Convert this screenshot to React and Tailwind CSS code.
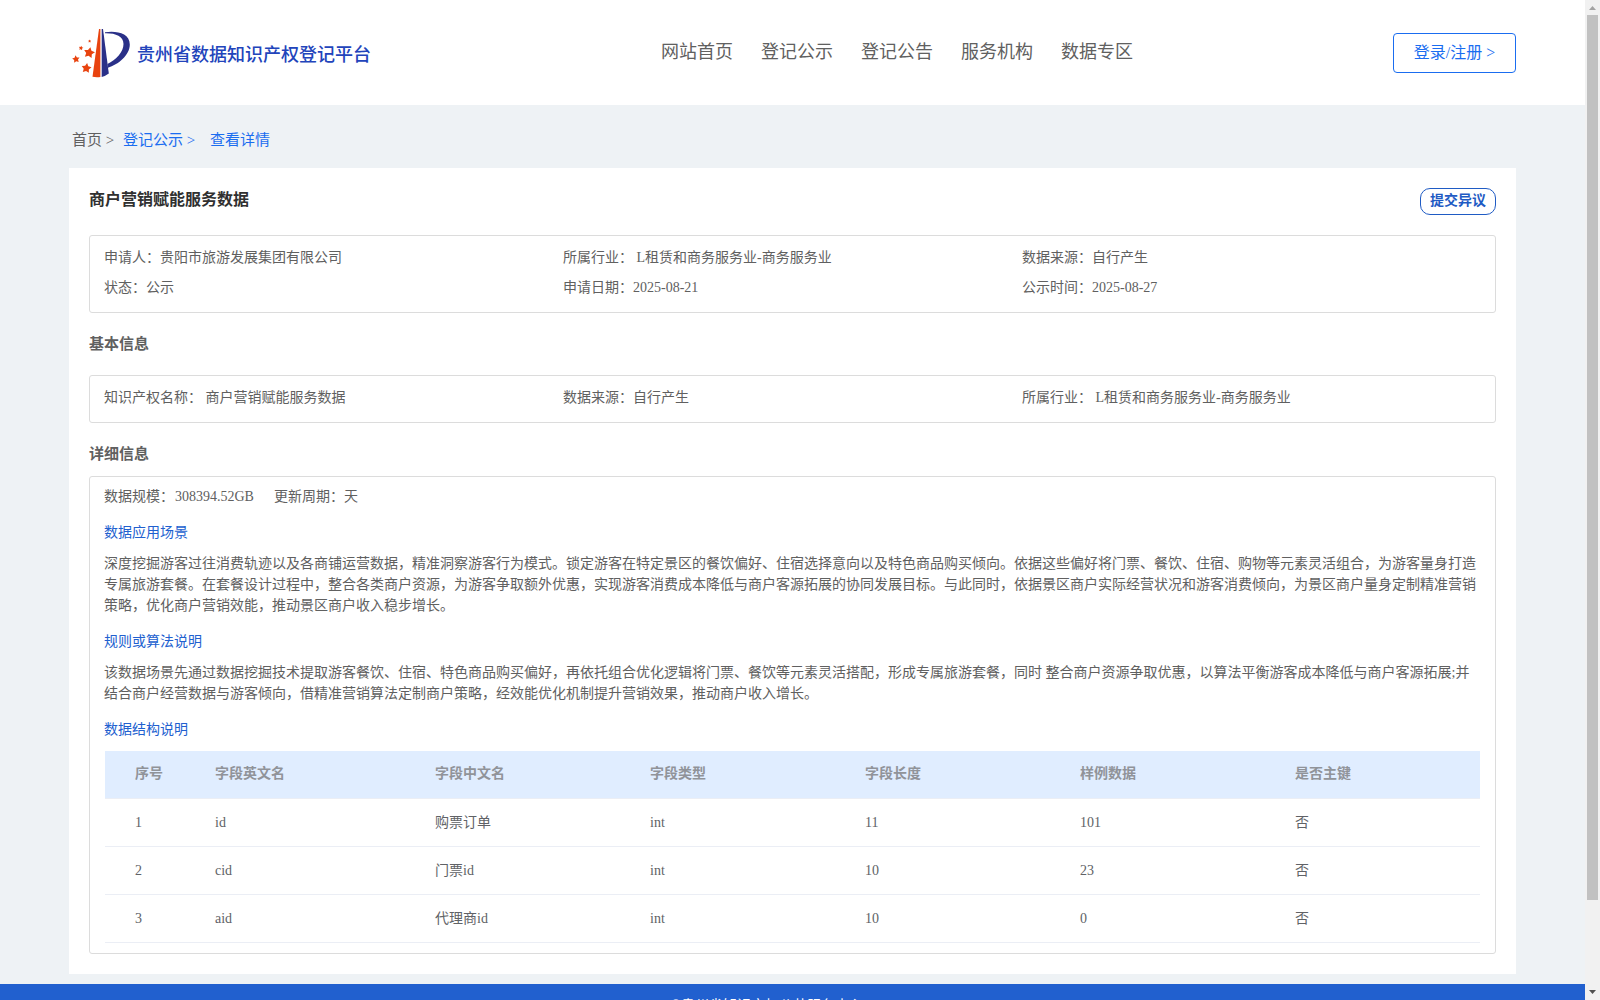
import React from 'react';

const navItems = ['网站首页', '登记公示', '登记公告', '服务机构', '数据专区'];

const summary = [
  ['申请人：', '贵阳市旅游发展集团有限公司'],
  ['所属行业：', ' L租赁和商务服务业-商务服务业'],
  ['数据来源：', '自行产生'],
  ['状态：', '公示'],
  ['申请日期：', '2025-08-21'],
  ['公示时间：', '2025-08-27'],
];

const basicInfo = [
  ['知识产权名称：', ' 商户营销赋能服务数据'],
  ['数据来源：', '自行产生'],
  ['所属行业：', ' L租赁和商务服务业-商务服务业'],
];

const sceneLines = [
  '深度挖掘游客过往消费轨迹以及各商铺运营数据，精准洞察游客行为模式。锁定游客在特定景区的餐饮偏好、住宿选择意向以及特色商品购买倾向。依据这些偏好将门票、餐饮、住宿、购物等元素灵活组合，为游客量身打造',
  '专属旅游套餐。在套餐设计过程中，整合各类商户资源，为游客争取额外优惠，实现游客消费成本降低与商户客源拓展的协同发展目标。与此同时，依据景区商户实际经营状况和游客消费倾向，为景区商户量身定制精准营销',
  '策略，优化商户营销效能，推动景区商户收入稳步增长。',
];

const ruleLines = [
  '该数据场景先通过数据挖掘技术提取游客餐饮、住宿、特色商品购买偏好，再依托组合优化逻辑将门票、餐饮等元素灵活搭配，形成专属旅游套餐，同时 整合商户资源争取优惠，以算法平衡游客成本降低与商户客源拓展;并',
  '结合商户经营数据与游客倾向，借精准营销算法定制商户策略，经效能优化机制提升营销效果，推动商户收入增长。',
];

const columns = ['序号', '字段英文名', '字段中文名', '字段类型', '字段长度', '样例数据', '是否主键'];

const rows = [
  ['1', 'id', '购票订单', 'int', '11', '101', '否'],
  ['2', 'cid', '门票id', 'int', '10', '23', '否'],
  ['3', 'aid', '代理商id', 'int', '10', '0', '否'],
];

const gridCols = 'grid grid-cols-[80px_220px_215px_215px_215px_215px_185px] pl-[30px]';

// [cx, cy, radius, rotation]
const stars = [
  [17.2, 24.8, 5.8, 12],
  [14.4, 40.2, 5.2, 8],
  [4, 31.2, 3.9, -8],
  [9, 20, 2.4, 10],
  [17.6, 13.2, 1.6, 0],
];

function starPoints(cx, cy, r, rotation) {
  return Array.from({ length: 10 }, (_, i) => {
    const radius = i % 2 ? r * 0.52 : r;
    const angle = ((i * 36 - 90 + rotation) * Math.PI) / 180;
    return `${(cx + radius * Math.cos(angle)).toFixed(2)},${(cy + radius * Math.sin(angle)).toFixed(2)}`;
  }).join(' ');
}

function Logo() {
  return (
    <svg width="58" height="50" viewBox="0 0 58 50" className="shrink-0">
      <path d="M27 1 L28.4 1 L28.4 49 Q24 49.5 20.500 48.800 Z" fill="#e8430f" />
      <path d="M29.700 1 L31 1 L36.8 45.5 Q33.500 48 29.700 49 Z" fill="#2a3088" />
      <path
        d="M33 4.300 C44 2.500 57.800 5 57.800 16.500 C57.800 27.500 46 36.500 36 39.800 L35.400 36 C44 32 51.500 24 51.500 16 C51.500 8 43 5 33 5.300 Z"
        fill="#2a3088"
      />
      <g fill="#e8430f">
        {stars.map(([cx, cy, r, rotation]) => (
          <polygon key={cx} points={starPoints(cx, cy, r, rotation)} />
        ))}
      </g>
    </svg>
  );
}

function InfoGrid({ items }) {
  return (
    <div className="grid grid-cols-3">
      {items.map(([label, value]) => (
        <div key={label} className="h-[30px] leading-[30px] whitespace-pre">
          {label}
          {value}
        </div>
      ))}
    </div>
  );
}

function TextBlock({ title, lines }) {
  return (
    <section>
      <h4 className="leading-[30px] text-[#2160cf]">{title}</h4>
      <div className="pt-[5px] pb-[11px] leading-[21px] whitespace-pre">
        {lines.map((line) => (
          <p key={line}>{line}</p>
        ))}
      </div>
    </section>
  );
}

function FieldTable() {
  return (
    <div className="ml-px w-[1375px]">
      <div className={`${gridCols} h-12 items-center border-b border-[#ebeef5] bg-[#e0edff] pb-px font-bold text-[#909399]`}>
        {columns.map((name) => (
          <div key={name}>{name}</div>
        ))}
      </div>
      {rows.map((row) => (
        <div key={row[0]} className={`${gridCols} h-12 items-center border-b border-[#ebeef5] text-[#606266]`}>
          {row.map((cell, i) => (
            <div key={columns[i]}>{cell}</div>
          ))}
        </div>
      ))}
    </div>
  );
}

function Scrollbar() {
  return (
    <div className="flex h-full w-[15px] shrink-0 flex-col items-center bg-[#f1f1f1]">
      <svg width="15" height="15" viewBox="0 0 15 15">
        <path d="M4 10 L7.500 6 L11 10 Z" fill="#a3a3a3" />
      </svg>
      <div className="h-[885px] w-[11px] bg-[#c1c1c1]" />
      <svg width="15" height="15" viewBox="0 0 15 15" className="mt-auto">
        <path d="M4 5 L11 5 L7.500 9 Z" fill="#505050" />
      </svg>
    </div>
  );
}

export default function App() {
  return (
    <div className="flex h-[1000px] w-[1600px] overflow-hidden bg-[#eef2f5] font-['Liberation_Serif','Noto_Sans_CJK_SC',serif] text-sm text-[#606060]">
      <div className="flex h-full w-[1585px] flex-col overflow-hidden">
        <header className="flex h-[105px] shrink-0 items-start bg-white pr-[69px] pl-[72px]">
          <div className="flex w-[589px] items-center pt-[28px]">
            <Logo />
            <span className="ml-[7px] pt-[3px] text-lg leading-6 font-medium text-[#2244bb]">贵州省数据知识产权登记平台</span>
          </div>
          <nav className="flex gap-7 pt-10 text-lg leading-6">
            {navItems.map((item) => (
              <a key={item}>{item}</a>
            ))}
          </nav>
          <button className="mt-[33px] ml-auto h-10 w-[123px] rounded border border-[#1a6df0] text-base leading-6 text-[#1a6df0]">
            登录/注册 &gt;
          </button>
        </header>

        <div className="flex h-[63px] shrink-0 items-center pt-[7px] pl-[72px] text-[15px] leading-6 whitespace-pre">
          <span className="w-[51px]">首页 &gt;</span>
          <span className="w-[87px] text-[#1a6df0]">登记公示 &gt;</span>
          <span className="text-[#1a6df0]">查看详情</span>
        </div>

        <main className="ml-[69px] h-[806px] w-[1447px] shrink-0 bg-white px-5 pt-5">
          <div className="flex h-[47px] items-start justify-between">
            <h2 className="text-base leading-6 font-bold text-[#303030]">商户营销赋能服务数据</h2>
            <button className="h-[27px] w-[76px] rounded-[10px] border border-[#1f5bc4] pb-px leading-5 font-bold text-[#1f5bc4]">
              提交异议
            </button>
          </div>

          <div className="h-[78px] rounded-[3px] border border-[#dcdcdc] px-[14px] pt-[7px]">
            <InfoGrid items={summary} />
          </div>

          <h3 className="h-[62px] text-[15px] leading-[62px] font-bold">基本信息</h3>
          <div className="h-12 rounded-[3px] border border-[#dcdcdc] px-[14px] pt-[7px]">
            <InfoGrid items={basicInfo} />
          </div>

          <h3 className="h-[53px] text-[15px] leading-[62px] font-bold">详细信息</h3>
          <div className="h-[478px] rounded-[3px] border border-[#dcdcdc] px-[14px] pt-[5px]">
            <div className="mb-[6px] flex gap-5 leading-[30px]">
              <span>
                数据规模：<span className="ml-px">308394.52GB</span>
              </span>
              <span>更新周期：天</span>
            </div>
            <TextBlock title="数据应用场景" lines={sceneLines} />
            <TextBlock title="规则或算法说明" lines={ruleLines} />
            <h4 className="mb-[6px] leading-[30px] text-[#2160cf]">数据结构说明</h4>
            <FieldTable />
          </div>
        </main>

        <footer className="mt-[10px] h-20 shrink-0 bg-[#2160cf] pt-[10px] pr-1 text-center leading-6 text-white">
          Copyright ©贵州省知识产权公共服务中心 All rights reserved
        </footer>
      </div>
      <Scrollbar />
    </div>
  );
}
